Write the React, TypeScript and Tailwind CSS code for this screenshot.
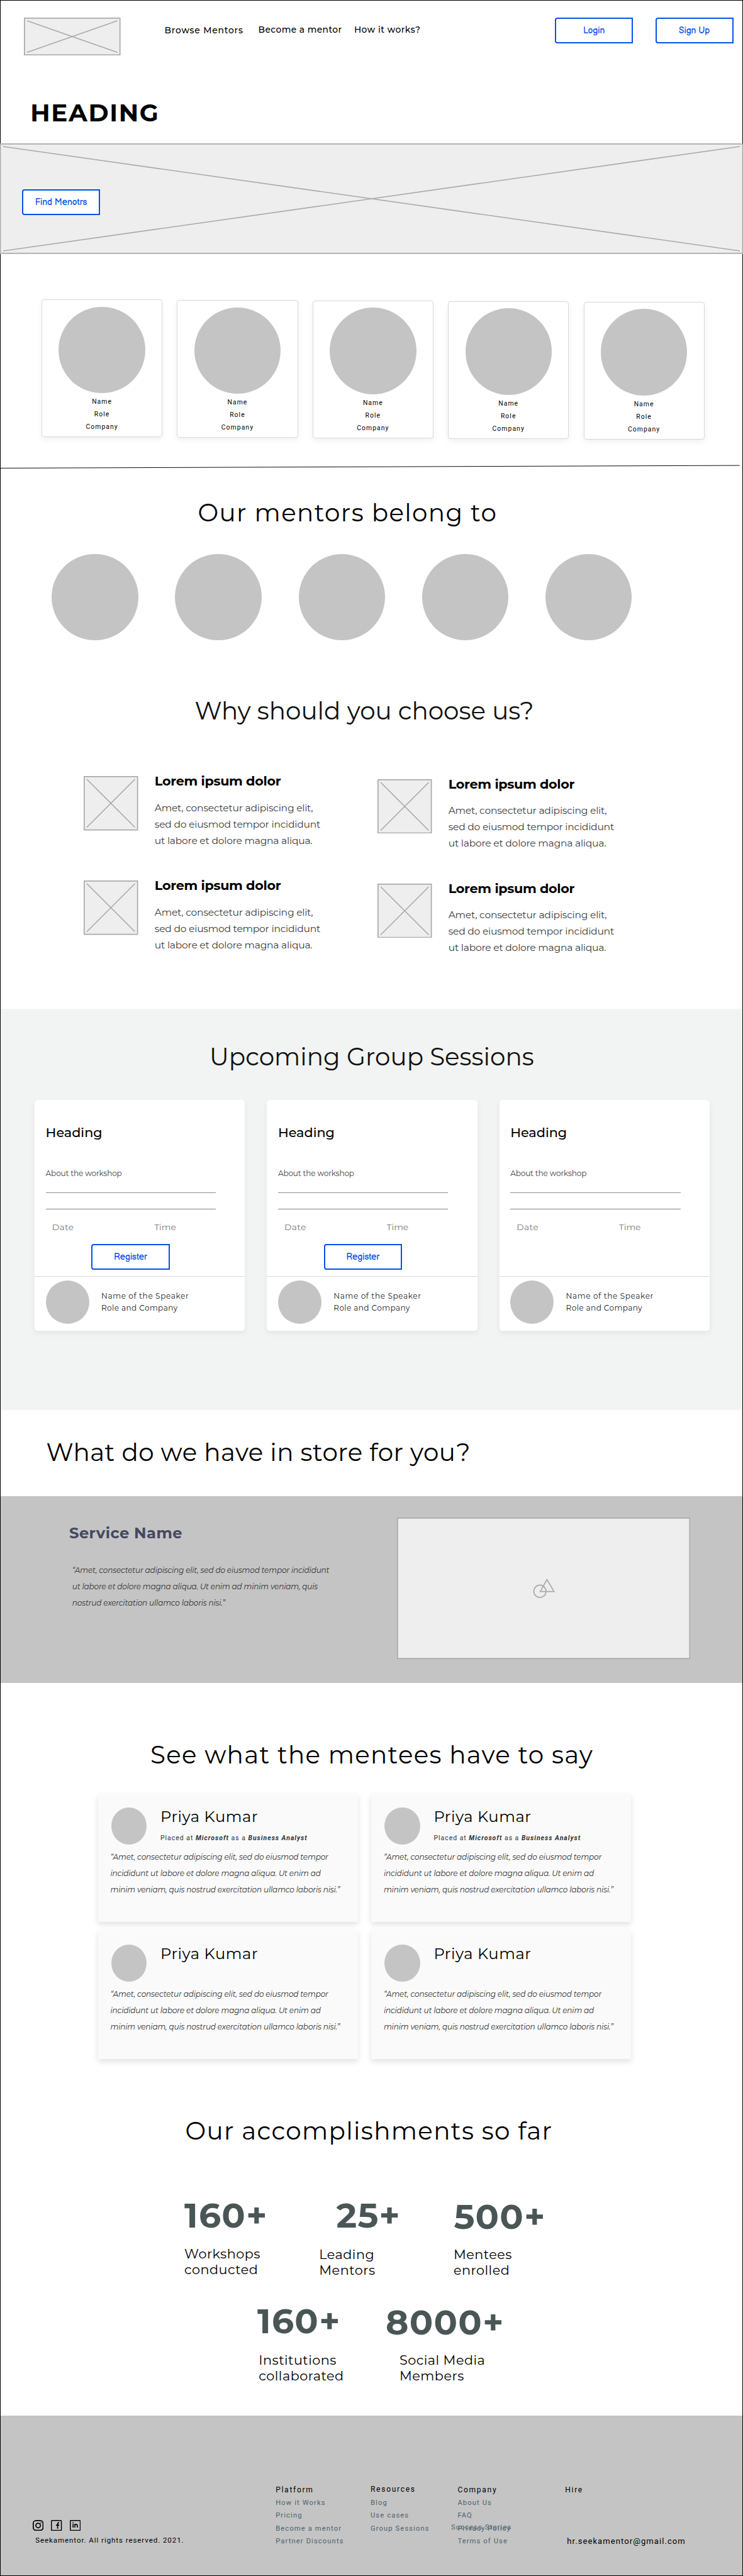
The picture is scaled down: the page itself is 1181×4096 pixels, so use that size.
import React from "react";

const TITLE = "text-[38.9px] leading-[48px] whitespace-nowrap";

function Placeholder({ w, h }: { w: number; h: number }) {
  return (
    <svg width={w} height={h} viewBox={`0 0 ${w} ${h}`} className="block shrink-0">
      <rect x="0.87" y="0.87" width={w - 1.73} height={h - 1.73} fill="#eeeeee" stroke="#aaaaaa" strokeWidth="1.73" />
      <path d={`M5 5L${w - 5} ${h - 5}M5 ${h - 5}L${w - 5} 5`} stroke="#aaaaaa" strokeWidth="1.6" fill="none" />
    </svg>
  );
}

function OutlineButton({ children }: { children: string }) {
  return (
    <button className="flex h-[41px] w-[124.3px] shrink-0 items-center justify-center rounded-l-[4px] border-2 border-[#0a50ea] bg-white font-['Balsamiq_Sans','Comic_Neue',Inter,sans-serif] text-[13.83px] font-normal leading-5 text-[#0a50ea]">
      <span className="pt-[1px]">{children}</span>
    </button>
  );
}

function Header() {
  return (
    <header>
      <div className="flex h-[88px] items-start pl-[38.4px] pr-[15.2px] pt-7">
        <Placeholder w={153.6} h={60.2} />
        <nav className="ml-[69.5px] flex text-[13.83px] font-medium leading-5 whitespace-nowrap">
          <a className="mt-[9.7px] w-[149px] tracking-[0.81px]">Browse Mentors</a>
          <a className="mt-[8.9px] w-[152.4px] tracking-[0.43px]">Become a mentor</a>
          <a className="mt-[8.9px] tracking-[0.52px]">How it works?</a>
        </nav>
        <div className="ml-auto flex gap-[35.2px]">
          <OutlineButton>Login</OutlineButton>
          <OutlineButton>Sign Up</OutlineButton>
        </div>
      </div>
      <h1 className="mt-[66.7px] pl-[48.3px] text-[38.9px] font-bold leading-[48px] tracking-[1.65px]">HEADING</h1>
    </header>
  );
}

function Hero() {
  return (
    <section className="relative mt-[25.8px] h-[175.6px] bg-[#eeeeee] pl-[35px] pt-[72.6px]">
      <svg className="absolute inset-0" width="1181" height="175.6" viewBox="0 0 1181 175.6">
        <rect x="0.5" y="0.87" width="1180" height="173.9" fill="none" stroke="#aaaaaa" strokeWidth="1.73" />
        <path d="M5 5L1176 171M5 171L1176 5" stroke="#aaaaaa" strokeWidth="1.6" />
      </svg>
      <div className="relative">
        <OutlineButton>Find Menotrs</OutlineButton>
      </div>
    </section>
  );
}

function MentorCard({ offset }: { offset: string }) {
  return (
    <div className={"flex h-[219px] w-[192.2px] shrink-0 flex-col items-center rounded-[4px] border border-[#d8d8d8] bg-white pt-[10.3px] shadow-[0_4px_10px_rgba(0,0,0,0.06)] " + offset}>
      <div className="size-[137.4px] shrink-0 rounded-full bg-[#c4c4c4]" />
      <div className="mt-[3.9px] text-center font-[Roboto,sans-serif] text-[10.4px] leading-[20px] tracking-[1.06px]">
        <p>Name</p>
        <p>Role</p>
        <p>Company</p>
      </div>
    </div>
  );
}

function Mentors() {
  const offsets = ["mt-0", "mt-[0.9px]", "mt-[1.7px]", "mt-[2.6px]", "mt-[3.5px]"];
  return (
    <section>
      <div className="mt-[72.4px] flex h-[219px] items-start gap-[23.2px] pl-[66px]">
        {offsets.map((o) => (
          <MentorCard key={o} offset={o} />
        ))}
      </div>
      <svg className="mt-[42.5px] block" width="1181" height="8" viewBox="0 0 1181 8">
        <path d="M0 6.4L1175.5 2.1" stroke="#000" strokeWidth="0.95" />
      </svg>
      <h2 className={TITLE + " mt-[44.8px] pl-[314.5px] tracking-[1.37px]"}>Our mentors belong to</h2>
      <div className="mt-[41.8px] flex gap-[58.8px] pl-[82.3px]">
        {[0, 1, 2, 3, 4].map((i) => (
          <div key={i} className="size-[137.4px] shrink-0 rounded-full bg-[#c4c4c4]" />
        ))}
      </div>
    </section>
  );
}

function Feature() {
  return (
    <article className="flex h-[166px] items-start gap-[26px]">
      <Placeholder w={86.5} h={86.5} />
      <div className="whitespace-nowrap">
        <h3 className="-mt-[4.1px] text-[20.74px] font-bold leading-6 tracking-[-0.3px]">Lorem ipsum dolor</h3>
        <p className="mt-[17.4px] text-[15.56px] leading-[25.9px] tracking-[-0.24px] text-[#3d3d3d]">
          Amet, consectetur adipiscing elit,
          <br />
          sed do eiusmod tempor incididunt
          <br />
          ut labore et dolore magna aliqua.
        </p>
      </div>
    </article>
  );
}

function WhyUs() {
  return (
    <section>
      <h2 className={TITLE + " mt-[88.3px] pl-[309.5px] text-[#111]"}>Why should you choose us?</h2>
      <div className="mt-[80.2px] flex h-[332px] items-start pl-[133.3px]">
        <div className="w-[466.9px]">
          <Feature />
          <Feature />
        </div>
        <div className="mt-[4.3px]">
          <Feature />
          <Feature />
        </div>
      </div>
    </section>
  );
}

function SessionCard({ register }: { register: boolean }) {
  return (
    <article className="h-[366.4px] w-[334.4px] shrink-0 rounded-[5px] bg-white pt-[39.1px] shadow-[0_4px_10px_rgba(0,0,0,0.06)]">
      <div className="pl-[17.6px]">
        <h3 className="text-[20.74px] font-medium leading-6">Heading</h3>
        <p className="mt-[45.9px] text-[12.1px] leading-4 tracking-[-0.16px] text-[#444]">About the workshop</p>
        <div className="mt-[22px] h-px w-[270.4px] bg-[#8f8f8f]" />
        <div className="mt-[24.7px] h-px w-[270.4px] bg-[#808080]" />
      </div>
      <div className="mt-[19.9px] flex pl-[27.8px] text-[13.83px] leading-4 text-[#777]">
        <span className="w-[162.4px] tracking-[0.3px]">Date</span>
        <span>Time</span>
      </div>
      <div className="mt-[18.9px] h-[41px] pl-[90.3px]">{register && <OutlineButton>Register</OutlineButton>}</div>
      <div className="mt-[10.4px] flex items-start gap-[19.3px] border-t border-[#d8d8d8] pl-[17.5px] pt-[5.6px]">
        <div className="size-[69.2px] shrink-0 rounded-full bg-[#c4c4c4]" />
        <p className="mt-[16.4px] text-[12.1px] leading-[18.8px] whitespace-nowrap text-[#1c1c1c]">
          <span className="tracking-[0.62px]">Name of the Speaker</span>
          <br />
          <span className="tracking-[0.39px]">Role and Company</span>
        </p>
      </div>
    </article>
  );
}

function Sessions() {
  return (
    <section className="mt-[37.8px] h-[637.8px] bg-[#f2f4f3] pt-[52px]">
      <h2 className={TITLE + " pl-[333px] text-[#111]"}>Upcoming Group Sessions</h2>
      <div className="mt-[45.2px] flex gap-[34.9px] pl-[55px]">
        <SessionCard register />
        <SessionCard register />
        <SessionCard register={false} />
      </div>
    </section>
  );
}

function Services() {
  return (
    <section>
      <div className="h-[137.4px] pl-[73.5px] pt-[43px]">
        <h2 className={TITLE + " tracking-[0.43px]"}>What do we have in store for you?</h2>
      </div>
      <div className="flex h-[296.7px] items-start bg-[#c4c4c4] pl-[110px]">
        <div className="w-[521px] pt-[44.6px]">
          <h3 className="text-[24.2px] font-bold leading-7 tracking-[0.45px] text-[#44495f]">Service Name</h3>
          <p className="mt-[32px] pl-[4.8px] text-[12.1px] italic leading-[25.9px] tracking-[-0.19px] whitespace-nowrap text-[#333]">
            “Amet, consectetur adipiscing elit, sed do eiusmod tempor incididunt
            <br />
            ut labore et dolore magna aliqua. Ut enim ad minim veniam, quis
            <br />
            nostrud exercitation ullamco laboris nisi.”
          </p>
        </div>
        <svg className="mt-[33.8px] shrink-0" width="466.2" height="225" viewBox="0 0 466.2 225" fill="none" stroke="#aaaaaa" strokeWidth="1.73">
          <rect x="0.87" y="0.87" width="464.5" height="223.3" fill="#eeeeee" />
          <circle cx="227.2" cy="117.2" r="9.8" />
          <path d="M238.4 98.6L249.6 117.6H227.8Z" />
        </svg>
      </div>
    </section>
  );
}

function Testimonial({ placed }: { placed: boolean }) {
  return (
    <article className="h-[204.8px] w-[412.6px] bg-[#fafafa] pt-[22.5px] shadow-[0_4px_9px_rgba(0,0,0,0.12)]">
      <div className="flex h-[65.8px] items-start pl-[21px]">
        <div className="h-[58.8px] w-[56.3px] shrink-0 rounded-[50%] bg-[#c4c4c4]" />
        <div className="ml-[21.7px] whitespace-nowrap">
          <h3 className="mt-px text-[24.2px] leading-7 tracking-[0.6px]">Priya Kumar</h3>
          {placed && (
            <p className="mt-[12.5px] font-[Roboto,sans-serif] text-[10.4px] leading-[14px] tracking-[1.02px] text-[#263238]">
              Placed at <b className="italic">Microsoft</b> as a <b className="italic">Business Analyst</b>
            </p>
          )}
        </div>
      </div>
      <p className="pl-[19.5px] text-[12.1px] italic leading-[25.9px] tracking-[-0.17px] whitespace-nowrap text-[#333]">
        “Amet, consectetur adipiscing elit, sed do eiusmod tempor
        <br />
        incididunt ut labore et dolore magna aliqua. Ut enim ad
        <br />
        minim veniam, quis nostrud exercitation ullamco laboris nisi.”
      </p>
    </article>
  );
}

function Testimonials() {
  return (
    <section>
      <h2 className={TITLE + " mt-[90.1px] pl-[239px] tracking-[1.27px]"}>See what the mentees have to say</h2>
      <div className="mt-[37.3px] grid grid-cols-[412.6px_412.6px] gap-x-[21.8px] gap-y-[13.1px] pl-[156px]">
        <Testimonial placed />
        <Testimonial placed />
        <Testimonial placed={false} />
        <Testimonial placed={false} />
      </div>
    </section>
  );
}

const NUM = "text-[55.3px] font-bold leading-[60px] tracking-[1.2px] text-[#4a5556]";
const LABEL = "text-[20.74px] leading-[24.9px] tracking-[0.5px]";

function Stats() {
  return (
    <section className="whitespace-nowrap">
      <h2 className={TITLE + " mt-[89.6px] pl-[294.5px] tracking-[1.32px]"}>Our accomplishments so far</h2>
      <div className="mt-[80px] flex h-[130.2px] items-start pl-[293px]">
        <div className="w-[215px]">
          <p className={NUM}>160+</p>
          <p className={LABEL + " mt-[20.4px]"}>
            Workshops
            <br />
            conducted
          </p>
        </div>
        <div className="w-[213.4px]">
          <p className={NUM + " pl-[26.6px]"}>25+</p>
          <p className={LABEL + " -ml-[0.7px] mt-[21.3px]"}>
            Leading
            <br />
            Mentors
          </p>
        </div>
        <div className="mt-[2px]">
          <p className={NUM}>500+</p>
          <p className={LABEL + " -ml-[0.5px] mt-[19.3px]"}>
            Mentees
            <br />
            enrolled
          </p>
        </div>
      </div>
      <div className="mt-[38px] flex h-[130.7px] items-start pl-[409px]">
        <div className="w-[204px]">
          <p className={NUM}>160+</p>
          <p className={LABEL + " mt-[20.9px] pl-[2.3px]"}>
            Institutions
            <br />
            collaborated
          </p>
        </div>
        <div className="mt-[2.3px]">
          <p className={NUM}>8000+</p>
          <p className={LABEL + " mt-[18.6px] pl-[22px]"}>
            Social Media
            <br />
            Members
          </p>
        </div>
      </div>
    </section>
  );
}

const COL_HEAD = "text-[12.1px] leading-5 tracking-[1.68px]";
const LINKS = "relative mt-[0.9px] flex flex-col text-[11.2px] leading-5 tracking-[1.12px] text-[#4c626d]";

function Footer() {
  return (
    <footer className="mt-[50.4px] flex h-[255px] items-start bg-[#c4c4c4] font-[Roboto,sans-serif] whitespace-nowrap">
      <div className="w-[438.2px] pl-[52px] pt-[166px]">
        <div className="flex gap-[12.1px]">
          <svg width="17.3" height="17.3" viewBox="0 0 20 20" fill="none" stroke="#000" strokeWidth="2">
            <rect x="1" y="1" width="18" height="18" rx="5" />
            <circle cx="10" cy="10" r="4.2" />
            <circle cx="15" cy="5" r="1" fill="#000" stroke="none" />
          </svg>
          <svg width="17.3" height="17.3" viewBox="0 0 20 20" fill="none" stroke="#000" strokeWidth="1.7">
            <rect x="0.85" y="0.85" width="18.3" height="18.3" rx="1" />
            <path d="M15.2 5H14.2C12.9 5 12.3 5.8 12.3 7V16M9.2 9.3H15.2" strokeWidth="2" />
          </svg>
          <svg width="17.3" height="17.3" viewBox="0 0 20 20" fill="none" stroke="#000" strokeWidth="1.7">
            <rect x="0.85" y="0.85" width="18.3" height="18.3" rx="1" />
            <path d="M6 7.3V14M9.2 14V7.3M9.2 10.2C9.2 7.4 13.8 7.2 13.8 10.2V14" strokeWidth="1.9" />
            <circle cx="6" cy="5.2" r="1.1" fill="#000" stroke="none" />
          </svg>
        </div>
        <p className="mt-[4.8px] pl-[4.2px] text-[11.5px] leading-5 tracking-[0.94px]">Seekamentor. All rights reserved. 2021.</p>
      </div>
      <div className="w-[150.8px] pt-[108.3px]">
        <h4 className={COL_HEAD}>Platform</h4>
        <div className={LINKS}>
          <a>How it Works</a>
          <a>Pricing</a>
          <a className="mt-[1px]">Become a mentor</a>
          <a>Partner Discounts</a>
        </div>
      </div>
      <div className="w-[138.4px] pt-[107.4px]">
        <h4 className={COL_HEAD}>Resources</h4>
        <div className={LINKS}>
          <a className="mt-[0.9px]">Blog</a>
          <a>Use cases</a>
          <a className="mt-[1px]">Group Sessions</a>
        </div>
      </div>
      <div className="w-[170.9px] pt-[108.3px]">
        <h4 className={COL_HEAD}>Company</h4>
        <div className={LINKS}>
          <a>About Us</a>
          <a>FAQ</a>
          <a className="mt-[1px]">Privacy Policy</a>
          <a>Terms of Use</a>
          <a className="absolute -left-[10.4px] top-[39.2px]">Success Stories</a>
        </div>
      </div>
      <div className="pt-[108.3px]">
        <h4 className={COL_HEAD}>Hire</h4>
        <p className="mt-[61.3px] pl-[3px] text-[13px] leading-5 tracking-[1.08px]">hr.seekamentor@gmail.com</p>
      </div>
    </footer>
  );
}

export default function App() {
  return (
    <div className="flow-root h-[4096px] w-[1181px] overflow-hidden bg-white font-[Montserrat,Inter,sans-serif] text-black outline outline-1 -outline-offset-1 outline-black">
      <Header />
      <Hero />
      <Mentors />
      <WhyUs />
      <Sessions />
      <Services />
      <Testimonials />
      <Stats />
      <Footer />
    </div>
  );
}
